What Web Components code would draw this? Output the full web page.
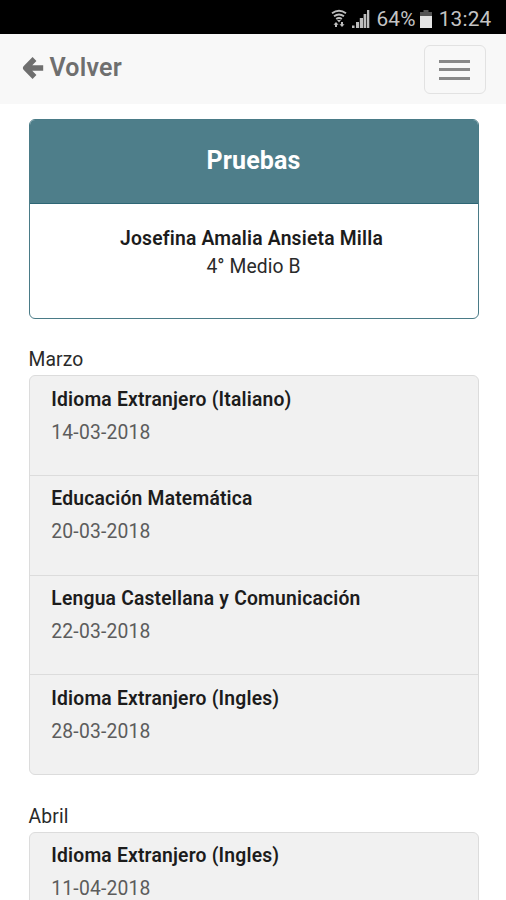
<!DOCTYPE html>
<html lang="es">
<head>
<meta charset="utf-8">
<title>Pruebas</title>
<style>
html, body { margin: 0; height: 900px; overflow: hidden; background: #fff; }
body { font-family: Roboto, "Liberation Sans", sans-serif; color: #2a2a2a; }
</style>
</head>
<body>
<school-app>
  <status-bar battery="64%" time="13:24"></status-bar>
  <nav-bar>Volver</nav-bar>
  <student-card heading="Pruebas" name="Josefina Amalia Ansieta Milla">4° Medio B</student-card>
  <month-group label="Marzo">
    <exam-item date="14-03-2018">Idioma Extranjero (Italiano)</exam-item>
    <exam-item date="20-03-2018">Educación Matemática</exam-item>
    <exam-item date="22-03-2018">Lengua Castellana y Comunicación</exam-item>
    <exam-item date="28-03-2018">Idioma Extranjero (Ingles)</exam-item>
  </month-group>
  <month-group label="Abril">
    <exam-item date="11-04-2018">Idioma Extranjero (Ingles)</exam-item>
  </month-group>
</school-app>
<script>
class Base extends HTMLElement {
  constructor() {
    super();
    this.attachShadow({ mode: "open" }).innerHTML = this.view();
  }
  attr(n) { return this.getAttribute(n) || ""; }
}
customElements.define("school-app", class extends Base {
  view() { return `<style>
    :host { display: flex; flex-direction: column; height: 900px; overflow: hidden; }
    </style><slot></slot>`; }
});
customElements.define("status-bar", class extends Base {
  view() { return `<style>
    :host { display: flex; flex: none; align-items: center; justify-content: flex-end; box-sizing: border-box;
      height: 34px; padding: 3px 14.500px 0 0; background: #000; color: #c4c4c4; font-size: 20.800px; line-height: 30px; }
    svg { display: block; flex: none; }
    .wifi { margin-right: 5px; } .signal { margin-right: 6px; }
    .battery { margin: 0 7px 0 4px; }
    </style>
    <svg class="wifi" width="16" height="20" viewBox="0 0 16 20" fill="none" stroke="#bdbdbd" stroke-width="1.9">
      <path d="M1 4.300Q8-.8 15 4.300M3 7.300Q8 3.600 13 7.300M5.200 10Q8 8 10.800 10"/>
      <path d="M8 13.500 6 11h4z" fill="#bdbdbd" stroke="none"/>
      <path d="M5 13l2.500 2.800H6V18H4v-2.200H2.500zM11 18l-2.500-2.800H10V13h2v2.200h1.500z" fill="#bdbdbd" stroke="none"/>
    </svg>
    <svg class="signal" width="18" height="18" viewBox="0 0 18 18" fill="#bdbdbd">
      <path d="M0 15.500h2.500V18H0zM4 12h3v6H4zM7.800 8H11v10H7.800zM11.600 4h2.700v14h-2.700zM15 0h2.300v18H15z"/>
    </svg>
    <span class="pct">${this.attr("battery")}</span>
    <svg class="battery" width="12" height="18" viewBox="0 0 12 18">
      <path d="M3.500 0h5v2H12v5H0V2h3.500z" fill="#555"/><path d="M0 6h12v12H0z" fill="#e4e4e4"/>
    </svg>
    <span class="time">${this.attr("time")}</span>
    <style>.pct, .time { letter-spacing: .2px; }</style>`; }
});
customElements.define("nav-bar", class extends Base {
  view() { return `<style>
    :host { display: flex; flex: none; align-items: center; box-sizing: border-box; height: 70px;
      padding: 0 20.500px 2px 22px; background: #f8f8f8; color: #6f6f6f; }
    a { display: flex; align-items: center; flex: 1; gap: 5.500px; font-size: 25px; font-weight: 600; line-height: 30px; letter-spacing: .2px; }
    svg { display: block; }
    button { display: flex; flex-direction: column; justify-content: center; align-items: center; gap: 5.500px;
      box-sizing: border-box; width: 62px; height: 49px; margin: 2px 0 0; padding: 1px 0 0; border: 1.500px solid #e2e2e2; border-radius: 6px; background: none; }
    i { display: block; width: 31px; height: 3px; background: #888; }
    </style>
    <a><svg width="22" height="24" viewBox="0 0 22 24" fill="none" stroke="#6f6f6f" stroke-width="5.400" stroke-linejoin="round">
      <path d="M12.500 3 3.700 12 12.500 21M4 12H21.200"/></svg><span><slot></slot></span></a>
    <button aria-label="Menú"><i></i><i></i><i></i></button>`; }
});
customElements.define("student-card", class extends Base {
  view() { return `<style>
    :host { display: block; flex: none; box-sizing: border-box; height: 199.500px; margin: 15px 27.500px 0 28.500px;
      border: 1.500px solid #4a7b87; border-radius: 6px; overflow: hidden; text-align: center; }
    header { display: flex; align-items: center; justify-content: center; box-sizing: border-box; height: 84px; padding-bottom: 2px;
      background: #4e7e8a; border-bottom: 1.500px solid #2e6675; color: #fff; font-size: 25px; font-weight: 700; letter-spacing: .1px; }
    section { padding-top: 21px; font-size: 19.300px; line-height: 28px; letter-spacing: .1px; }
    .name { margin-left: -4px; font-weight: 600; color: #1c1c1c; letter-spacing: .2px; } p { margin: 0; }
    </style>
    <header><span>${this.attr("heading")}</span></header>
    <section><p class="name"><span>${this.attr("name")}</span></p><p><span><slot></slot></span></p></section>`; }
});
customElements.define("month-group", class extends Base {
  view() { return `<style>
    :host { display: block; flex: none; margin: 26.500px 27.500px 0 28.500px; }
    h2 { margin: 0; font-size: 19.300px; font-weight: 400; line-height: 30px; height: 30px; letter-spacing: .15px; }
    .list { border: 1px solid #dcdcdc; border-radius: 6px; background: #f1f1f1; overflow: hidden; }
    </style>
    <h2><span>${this.attr("label")}</span></h2><div class="list"><slot></slot></div>`; }
});
customElements.define("exam-item", class extends Base {
  view() { return `<style>
    :host { display: block; box-sizing: border-box; height: 99.800px; padding: 7.500px 22px 0 21.800px;
      border-bottom: 1.500px solid #dcdcdc; font-size: 19.300px; letter-spacing: .2px; }
    :host(:last-child) { height: 99px; border-bottom: 0; }
    .subject { font-weight: 600; line-height: 32px; color: #1c1c1c; } .date { line-height: 33px; color: #5c5c5c; }
    </style>
    <div class="subject"><span><slot></slot></span></div><div class="date"><span>${this.attr("date")}</span></div>`; }
});
</script>
</body>
</html>
